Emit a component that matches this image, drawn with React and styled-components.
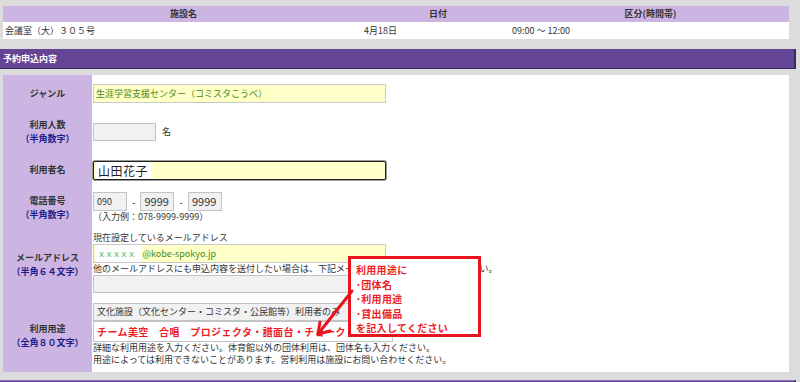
import React from "react";
import styled, { createGlobalStyle } from "styled-components";

const Global = createGlobalStyle`
  html, body { margin: 0; padding: 0; background: #dcdcdc; }
  body { font-family: "Noto Sans CJK JP", "Noto Sans", sans-serif; color: #333; }
  * { box-sizing: border-box; }
`;

const Page = styled.div`
  width: 800px;
  height: 382px;
  overflow: hidden;
  background: #dcdcdc;
  padding-top: 6px;
`;

const Summary = styled.div`
  margin: 0 11px 0 3px;
  display: grid;
  grid-template-columns: 361px 148px 1fr;
  background: #fff;
`;

const HeadCell = styled.div`
  background: #ccb5e2;
  height: 16px;
  font-size: 9px;
  font-weight: bold;
  line-height: 16px;
  text-align: center;
  color: #333;
`;

const DataCell = styled.div`
  height: 17px;
  font-size: 9px;
  line-height: 17px;
  padding-left: ${(p) => p.$pad || 0}px;
  color: #333;
`;

const SectionBar = styled.div`
  margin-top: 10px;
  width: 796px;
  height: 20px;
  background: #644495;
  border-bottom: 1px solid #3b2a5c;
  border-right: 2px solid #3b2a5c;
  color: #fff;
  font-size: 9px;
  font-weight: bold;
  line-height: 19px;
  padding-left: 3px;
`;

const Panel = styled.div`
  position: relative;
  margin: 6px 11px 0 3px;
  background: #fff;
  display: grid;
  grid-template-columns: 89px 1fr;
  grid-template-rows: 37px 40px 36px 40px 70px 74px;
`;

const Label = styled.div`
  background: #ccb5e2;
  display: flex;
  flex-direction: column;
  align-items: center;
  justify-content: center;
  font-size: 9px;
  font-weight: bold;
  line-height: 14px;
  color: #333;
  padding-top: ${(p) => p.$shift || 0}px;
`;

const Sub = styled.span`
  color: #1c1c8a;
`;

const Field = styled.div`
  display: flex;
  flex-direction: column;
  justify-content: ${(p) => (p.$top ? "flex-start" : "center")};
  align-items: flex-start;
  padding: ${(p) => p.$top || 0}px 0 0 1px;
  font-size: 9px;
  line-height: 12px;
  color: #333;
`;

const Inline = styled.div`
  display: flex;
  align-items: center;
  gap: ${(p) => p.$gap || 0}px;
`;

const YellowBox = styled.div`
  width: 293px;
  height: 19px;
  background: #ffffc8;
  border: 1px solid #c9c9c9;
  color: #3f8a22;
  font-size: 9px;
  line-height: 17px;
  padding-left: 2px;
  display: flex;
  align-items: center;
`;

const FocusBox = styled.div`
  width: 293px;
  height: 19px;
  background: #ffffc8;
  border: 1px solid #222;
  border-radius: 2px;
  box-shadow: 0 0 0 1px #999;
  padding-left: 2px;
  display: flex;
  align-items: center;
`;

const Highlight = styled.span`
  background: #fff;
  font-size: 12px;
  line-height: 17px;
  padding: 0 3px 0 2px;
  color: #222;
  letter-spacing: 0.5px;
`;

const GrayInput = styled.div`
  width: ${(p) => p.$w}px;
  height: ${(p) => p.$h || 18}px;
  background: ${(p) => (p.$white ? "#fff" : "#f1f1f1")};
  border: 1px solid #c3c3c3;
  font-size: ${(p) => p.$fs || 9}px;
  line-height: ${(p) => (p.$h || 18) - 2}px;
  padding-left: 3px;
  color: #333;
  white-space: nowrap;
  overflow: hidden;
`;

const Dash = styled.span`
  font-size: 10px;
  padding: 0 2px;
`;

const Mail = styled.span`
  color: #3f8a22;
`;

const MailUser = styled.span`
  background: #fff;
  color: #55bb66;
  font-size: 9px;
  letter-spacing: -1.5px;
  padding: 0 6px 0 1px;
  margin-right: 2px;
`;

const RedText = styled.span`
  color: #ee1c25;
  font-weight: bold;
  font-size: 10px;
  letter-spacing: 0.4px;
`;

const Callout = styled.div`
  position: absolute;
  left: 345px;
  top: 181px;
  width: 133px;
  height: 81px;
  background: #fff;
  border: 3px solid #e8141e;
  padding: 4px 0 0 5px;
  color: #ee1c25;
  font-size: 10px;
  font-weight: bold;
  line-height: 14.5px;
  letter-spacing: 0.3px;
`;

const ArrowSvg = styled.svg`
  position: absolute;
  left: 300px;
  top: 200px;
  width: 60px;
  height: 70px;
  overflow: visible;
`;

const BottomBar = styled.div`
  margin-top: 8px;
  width: 796px;
  height: 4px;
  background: #644495;
  border-right: 2px solid #3b2a5c;
  border-top: 1px solid #8a76b0;
`;

export default function App() {
  return (
    <Page>
      <Global />
      <Summary>
        <HeadCell>施設名</HeadCell>
        <HeadCell>日付</HeadCell>
        <HeadCell>区分(時間帯)</HeadCell>
        <DataCell $pad={2}>会議室（大）３０５号</DataCell>
        <DataCell>4月18日</DataCell>
        <DataCell>09:00 ～ 12:00</DataCell>
      </Summary>

      <SectionBar>予約申込内容</SectionBar>

      <Panel>
        <Label>ジャンル</Label>
        <Field>
          <YellowBox>生涯学習支援センター（コミスタこうべ）</YellowBox>
        </Field>

        <Label>
          <span>利用人数</span>
          <Sub>（半角数字）</Sub>
        </Label>
        <Field>
          <Inline $gap={6}>
            <GrayInput $w={63} $h={18} />
            <span>名</span>
          </Inline>
        </Field>

        <Label>利用者名</Label>
        <Field>
          <FocusBox>
            <Highlight>山田花子</Highlight>
          </FocusBox>
        </Field>

        <Label>
          <span>電話番号</span>
          <Sub>（半角数字）</Sub>
        </Label>
        <Field $top={4}>
          <Inline $gap={3}>
            <GrayInput $w={34} $h={19}>090</GrayInput>
            <Dash>-</Dash>
            <GrayInput $w={34} $h={19} $fs={11}>9999</GrayInput>
            <Dash>-</Dash>
            <GrayInput $w={34} $h={19} $fs={11}>9999</GrayInput>
          </Inline>
          <span>（入力例：078-9999-9999）</span>
        </Field>

        <Label $shift={4}>
          <span>メールアドレス</span>
          <Sub>（半角６４文字）</Sub>
        </Label>
        <Field $top={4}>
          <span>現在設定しているメールアドレス</span>
          <YellowBox>
            <MailUser>ｘｘｘｘｘ</MailUser>
            <Mail>@kobe-spokyo.jp</Mail>
          </YellowBox>
          <span>他のメールアドレスにも申込内容を送付したい場合は、下記メールアドレス欄に入力してください。</span>
          <GrayInput $w={300} $h={18} />
        </Field>

        <Label $shift={2}>
          <span>利用用途</span>
          <Sub>（全角８０文字）</Sub>
        </Label>
        <Field $top={5}>
          <GrayInput $w={300} $h={18}>文化施設（文化センター・コミスタ・公民館等）利用者のみ</GrayInput>
          <GrayInput $w={300} $h={21} $white>
            <RedText>チーム美空　合唱　プロジェクタ・譜面台・チョーク</RedText>
          </GrayInput>
          <span>詳細な利用用途を入力ください。体育館以外の団体利用は、団体名も入力ください。</span>
          <span>用途によっては利用できないことがあります。営利利用は施設にお問い合わせください。</span>
        </Field>

        <Callout>
          <div>利用用途に</div>
          <div>･団体名</div>
          <div>･利用用途</div>
          <div>･貸出備品</div>
          <div>を記入してください</div>
        </Callout>

        <ArrowSvg viewBox="300 200 60 70">
          <g stroke="#e8141e" strokeWidth="3" strokeLinecap="round" fill="none">
            <line x1="349" y1="216" x2="315" y2="259" />
            <line x1="315" y1="259" x2="327" y2="256" />
            <line x1="315" y1="259" x2="317" y2="247" />
          </g>
        </ArrowSvg>
      </Panel>
      <BottomBar />
    </Page>
  );
}
